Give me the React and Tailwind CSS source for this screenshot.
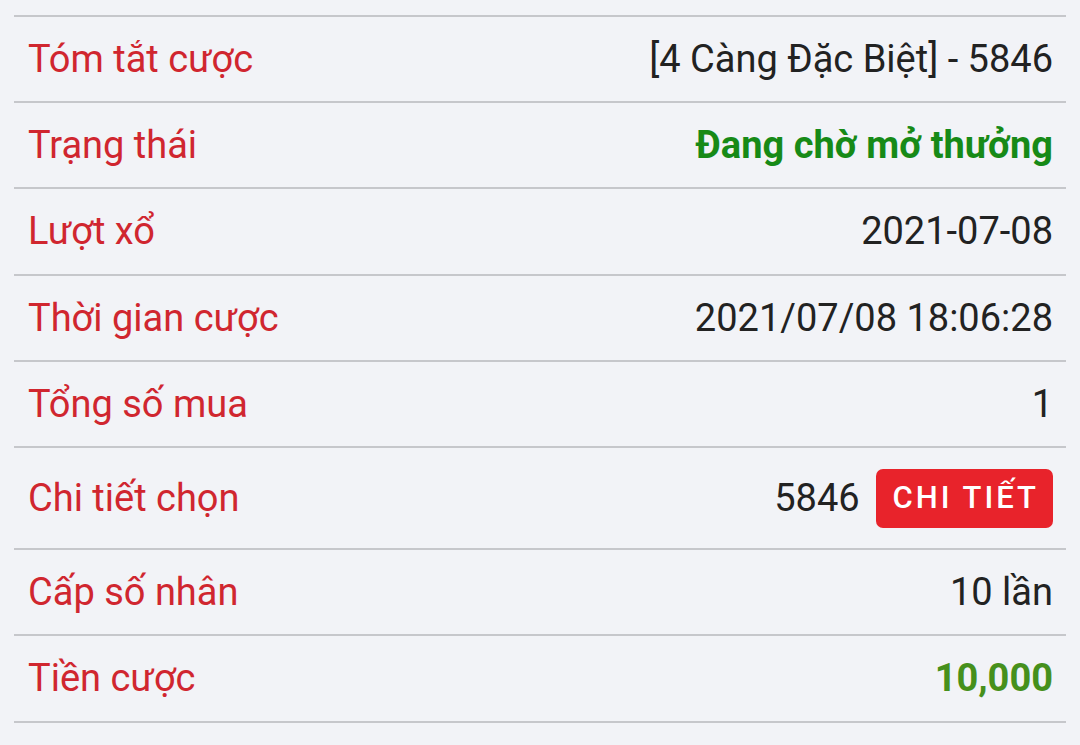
export default function App() {
  const rows = [
    { label: "Tóm tắt cược", value: "[4 Càng Đặc Biệt] - 5846", h: "h-[86px]" },
    { label: "Trạng thái", value: "Đang chờ mở thưởng", cls: "font-bold text-[#178a17]", h: "h-[86px]" },
    { label: "Lượt xổ", value: "2021-07-08", h: "h-[87px]" },
    { label: "Thời gian cược", value: "2021/07/08 18:06:28", h: "h-[86px]" },
    { label: "Tổng số mua", value: "1", h: "h-[86px]" },
    { label: "Chi tiết chọn", value: "5846", button: true, h: "h-[102px]" },
    { label: "Cấp số nhân", value: "10 lần", h: "h-[86px]" },
    { label: "Tiền cược", value: "10,000", cls: "font-bold text-[#46901c]", h: "h-[87px]" },
  ];

  return (
    <div
      className="min-h-[745px] bg-[#f2f3f7] px-[14px] pt-[15px]"
      style={{ fontFamily: "Roboto, 'Noto Sans', sans-serif" }}
    >
      <div className="border-t-2 border-[#c6c7cb]">
        {rows.map((r) => (
          <div
            key={r.label}
            className={`flex items-center justify-between border-b-2 border-[#c6c7cb] pl-[14px] pr-[13px] text-[38px] ${r.h}`}
          >
            <span className="text-[#d0262f]">{r.label}</span>
            {r.button ? (
              <div className="flex items-center gap-4">
                <span className="text-[#222]">{r.value}</span>
                <button className="flex h-[59px] items-center rounded-[7px] bg-[#e8232b] pl-[17px] pr-[14px] text-[31px] font-medium tracking-[3px] text-white">
                  CHI TIẾT
                </button>
              </div>
            ) : (
              <span className={r.cls || "text-[#222]"}>{r.value}</span>
            )}
          </div>
        ))}
      </div>
    </div>
  );
}
